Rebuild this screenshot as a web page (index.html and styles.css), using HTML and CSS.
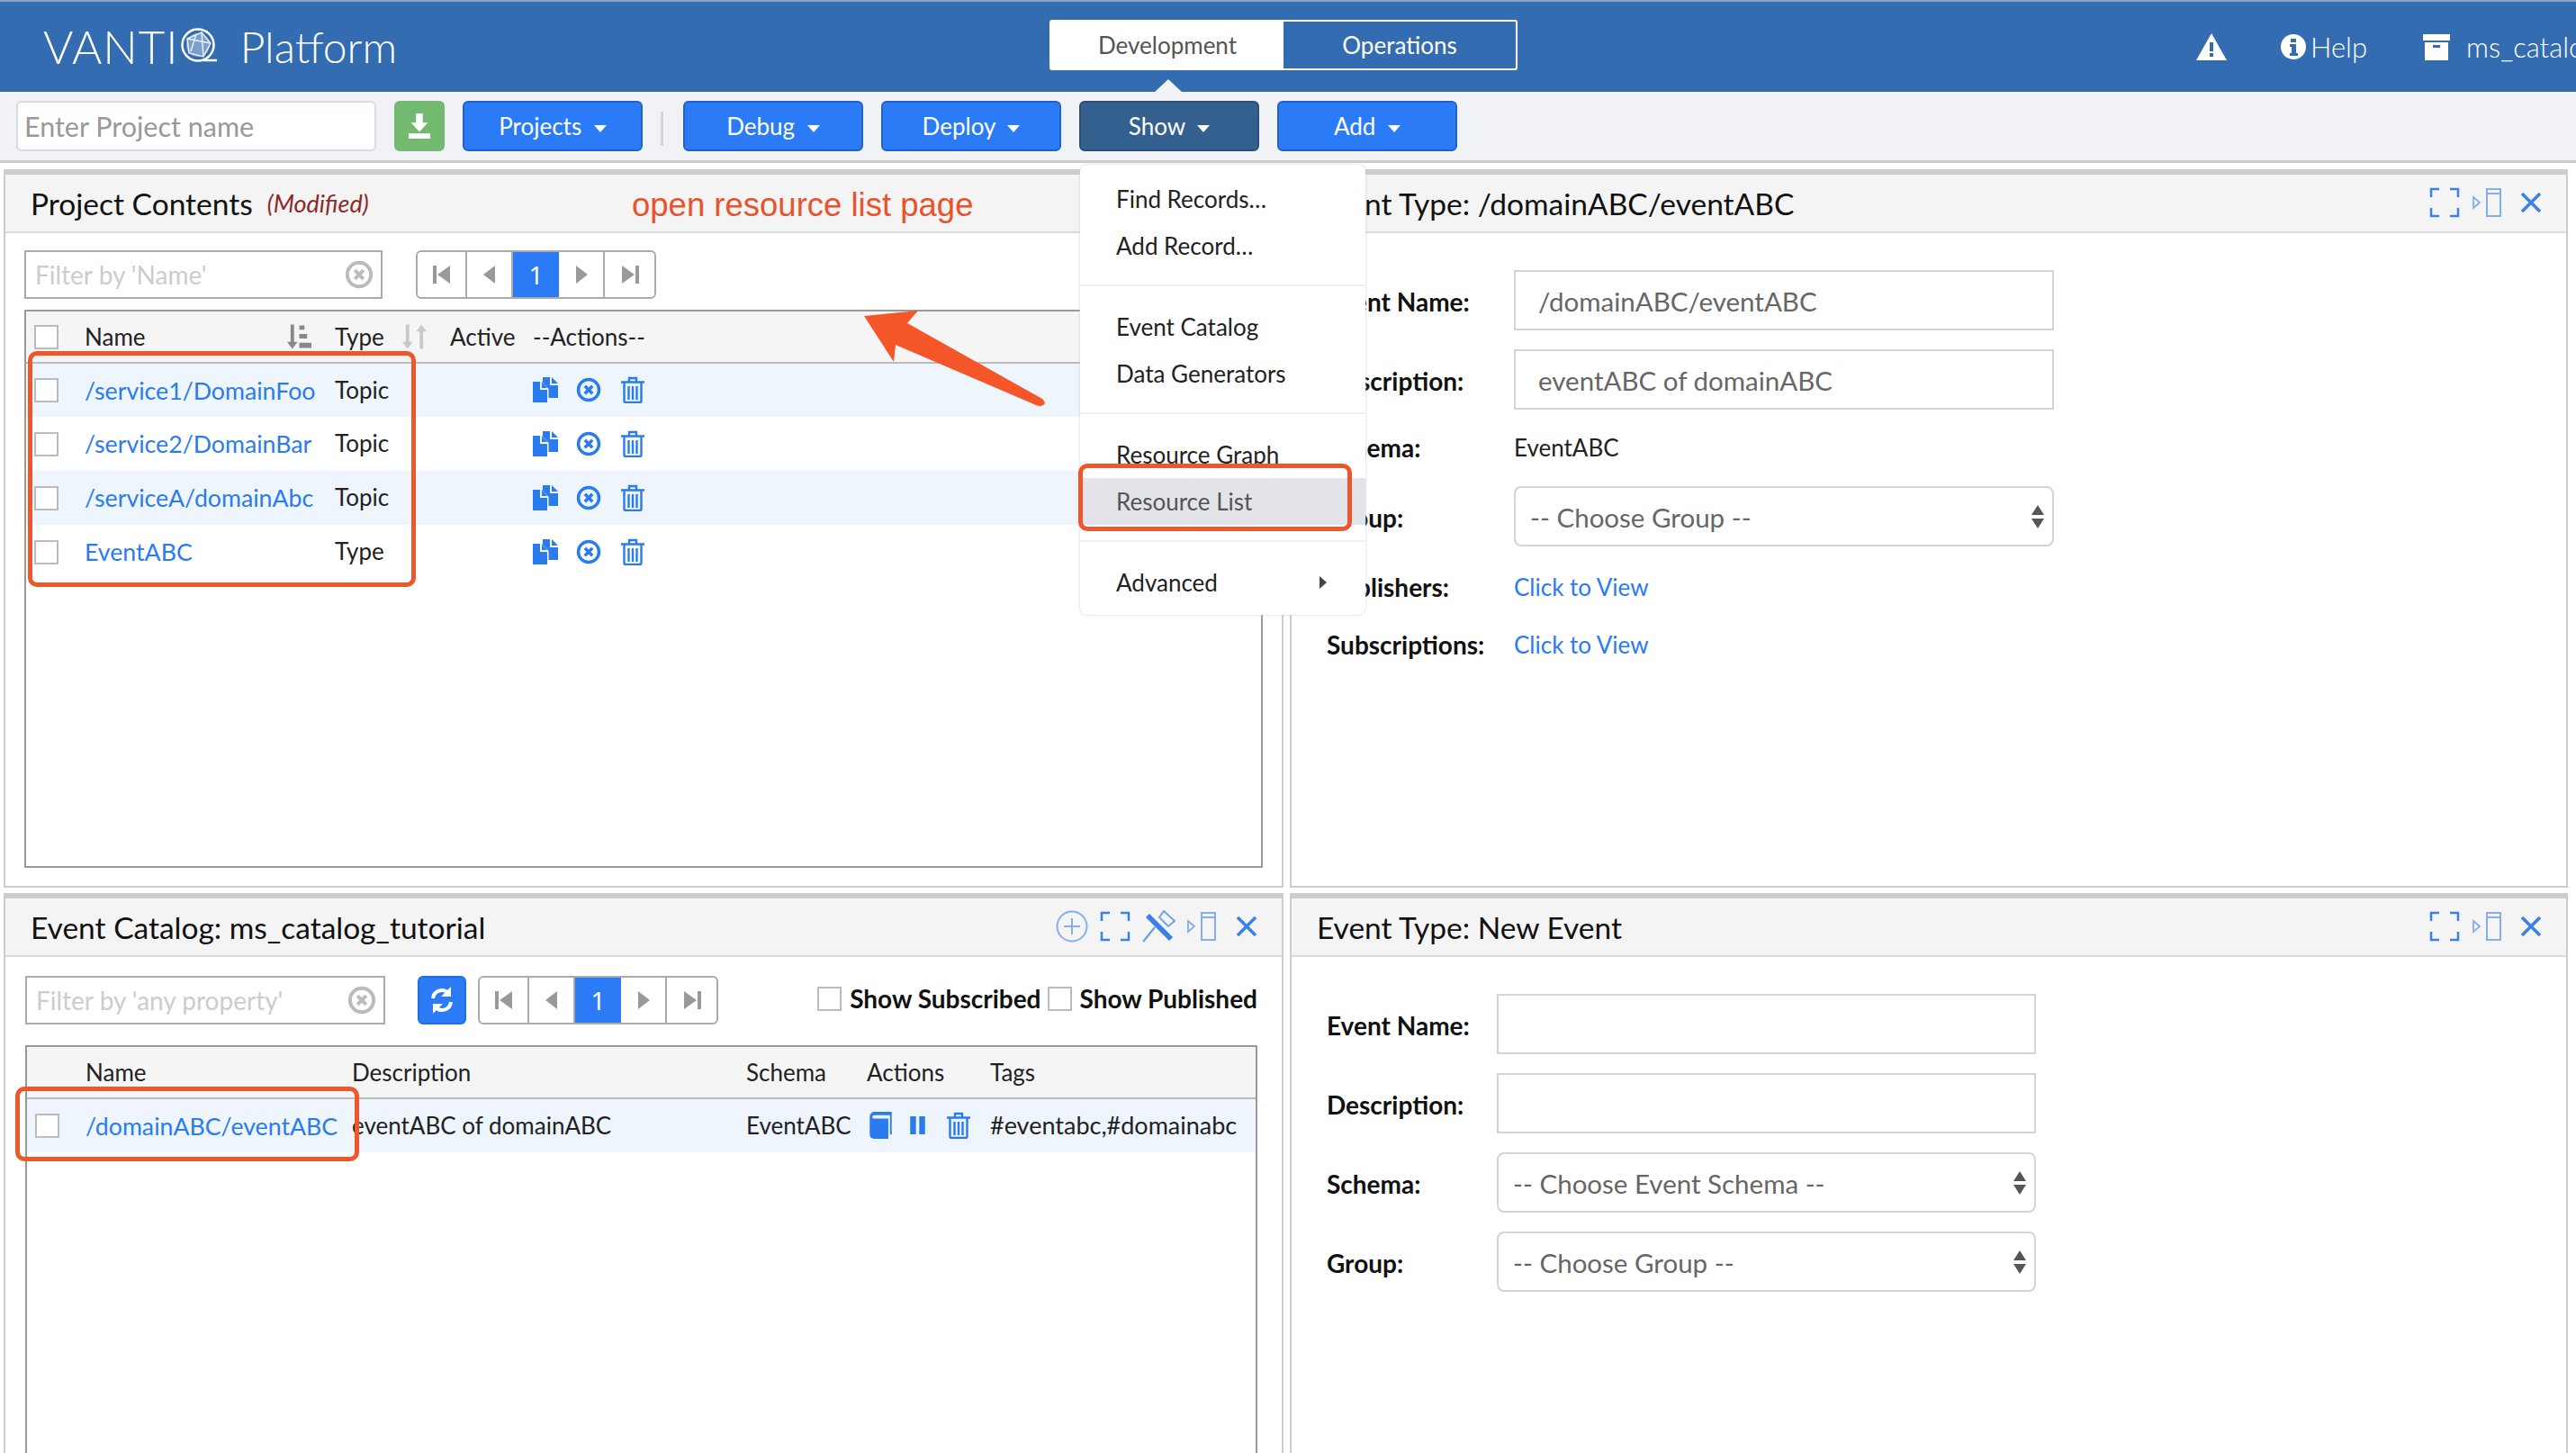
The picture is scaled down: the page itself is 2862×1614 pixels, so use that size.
FILE: index.html
```html
<!DOCTYPE html>
<html lang="en">
    <head>
        <meta charset="UTF-8" />
        <title>VANTIQ Platform</title>
        <link rel="stylesheet" href="styles.css">
    </head>

    <body>
        <!-- shared icons -->
        <svg class="sprite">
            <symbol id="i-copy" viewBox="0 0 28 28">
                <path d="M11 0h8v9h9v14H17.500V13l-6.500-7z"/>
                <path d="M21 0l7 7h-7z"/>
                <path d="M0 5h8v9h8v14H0z"/>
                <path d="M10 5l6 7h-6z"/>
            </symbol>
            <symbol id="i-cancel" viewBox="0 0 28 28">
                <circle cx="14" cy="14" r="11.500" fill="none" stroke="currentColor" stroke-width="3.500"/>
                <path d="M9.800 9.800l8.400 8.400M18.200 9.800l-8.400 8.400" fill="none" stroke="currentColor" stroke-width="3.500"/>
            </symbol>
            <symbol id="i-trash" viewBox="0 0 26 30">
                <path d="M0 6.500h26M9 6V2h8v4M3.500 7v20.500a1.500 1.500 0 0 0 1.500 1.500h16a1.500 1.500 0 0 0 1.500-1.500V7M8.500 11v15M13 11v15M17.500 11v15" fill="none" stroke="currentColor" stroke-width="2.400"/>
            </symbol>
            <symbol id="i-first" viewBox="0 0 24 24">
                <path d="M2 2h4v20H2zM21 2v20L7 12z"/>
            </symbol>
            <symbol id="i-prev" viewBox="0 0 24 24">
                <path d="M18 2v20L5 12z"/>
            </symbol>
            <symbol id="i-next" viewBox="0 0 24 24">
                <path d="M6 2v20l13-10z"/>
            </symbol>
            <symbol id="i-last" viewBox="0 0 24 24">
                <path d="M3 2v20l14-10zM18 2h4v20h-4z"/>
            </symbol>
            <symbol id="i-full" viewBox="0 0 34 34">
                <path d="M11 2H2v9M23 2h9v9M2 23v9h9M32 23v9h-9" fill="none" stroke="currentColor" stroke-width="2.500"/>
            </symbol>
            <symbol id="i-side" viewBox="0 0 34 34">
                <path d="M1 11l7 6-7 6z" fill="none" stroke="currentColor" stroke-width="1.800" opacity=".6"/>
                <path d="M16 2h15v30H16zM16 7h15" fill="none" stroke="currentColor" stroke-width="2" opacity=".6"/>
            </symbol>
            <symbol id="i-close" viewBox="0 0 24 24">
                <path d="M2 2l20 20M22 2L2 22" fill="none" stroke="currentColor" stroke-width="3.500"/>
            </symbol>
            <symbol id="i-plus" viewBox="0 0 36 36">
                <circle cx="18" cy="18" r="16.500" fill="none" stroke="currentColor" stroke-width="2" opacity=".6"/>
                <path d="M18 9v18M9 18h18" fill="none" stroke="currentColor" stroke-width="2" opacity=".6"/>
            </symbol>
            <symbol id="i-pin" viewBox="0 0 37 36">
                <path d="M1 35l13-16" fill="none" stroke="currentColor" stroke-width="2" opacity=".8"/>
                <path d="M24 1l12 11-7 6-10-10z" fill="none" stroke="currentColor" stroke-width="2" opacity=".7"/>
                <path d="M8 4l26 26-4 4L4 8z" fill="currentColor"/>
            </symbol>
        </svg>

        <header class="top-bar">
            <div class="brand">
                <span class="logo-text">VANTI</span>
                <svg class="logo-q" viewBox="0 0 42 40">
                    <circle cx="20" cy="19" r="17.500" fill="none" stroke="#fff" stroke-width="2.500"/>
                    <circle cx="20" cy="19" r="13" fill="#fff" opacity=".35"/>
                    <path d="M8 12l16-7 10 12-8 15-16-4zM12 26l6-19M8 12l26 5M24 5l2 27" fill="none" stroke="#fff" stroke-width="1.500" opacity=".85"/>
                    <path d="M26 36h15" stroke="#fff" stroke-width="2.500"/>
                </svg>
                <span class="platform">Platform</span>
            </div>
            <div class="tabs">
                <div class="tab active">Development</div>
                <div class="tab">Operations</div>
            </div>
            <svg class="top-icon warn" viewBox="0 0 34 30">
                <path d="M17 0L34 30H0z" fill="#fff"/>
                <path d="M15 10h4v10h-4zM15 22h4v4h-4z" fill="#336cb0"/>
            </svg>
            <div class="help">
                <svg class="top-icon info" viewBox="0 0 28 28">
                    <circle cx="14" cy="14" r="14" fill="#fff"/>
                    <path d="M11 5h6v4h-6zM10 11h7v10h2v3H10v-3h2v-7h-2z" fill="#336cb0"/>
                </svg>
                <span>Help</span>
            </div>
            <div class="account">
                <svg class="top-icon box" viewBox="0 0 30 30">
                    <path d="M0 1h30v7H0zM2 10h26v20H2z" fill="#fff"/>
                    <path d="M11 13h8v3h-8z" fill="#336cb0"/>
                </svg>
                <span>ms_catalog_tutorial</span>
            </div>
        </header>

        <nav class="tool-bar">
            <input class="project-name" type="text" placeholder="Enter Project name">
            <button class="btn btn-save">
                <svg viewBox="0 0 28 30"><path d="M10 0h8v11h6L14 22 4 11h6zM1 24h26v6H1z" fill="#fff"/></svg>
            </button>
            <button class="btn">Projects <i class="caret"></i></button>
            <span class="tool-sep"></span>
            <button class="btn">Debug <i class="caret"></i></button>
            <button class="btn">Deploy <i class="caret"></i></button>
            <div class="menu-wrap">
                <button class="btn btn-open">Show <i class="caret"></i></button>
                <div class="menu">
                    <div class="menu-item">Find Records…</div>
                    <div class="menu-item">Add Record…</div>
                    <div class="menu-sep"></div>
                    <div class="menu-item">Event Catalog</div>
                    <div class="menu-item">Data Generators</div>
                    <div class="menu-sep"></div>
                    <div class="menu-item">Resource Graph</div>
                    <div class="menu-item hover">Resource List</div>
                    <div class="menu-sep"></div>
                    <div class="menu-item">Advanced <i class="caret-right"></i></div>
                </div>
            </div>
            <button class="btn">Add <i class="caret"></i></button>
        </nav>

        <main class="panels">
            <!-- project contents -->
            <section class="panel">
                <div class="panel-head">
                    <h2>Project Contents</h2>
                    <em class="modified">(Modified)</em>
                </div>
                <div class="list-tools">
                    <div class="filter">
                        <input type="text" placeholder="Filter by 'Name'">
                        <svg class="filter-clear"><use href="#i-cancel"/></svg>
                    </div>
                    <div class="pager">
                        <span><svg><use href="#i-first"/></svg></span>
                        <span><svg><use href="#i-prev"/></svg></span>
                        <span class="current">1</span>
                        <span><svg><use href="#i-next"/></svg></span>
                        <span><svg><use href="#i-last"/></svg></span>
                    </div>
                </div>
                <div class="grid-wrap project-grid">
                    <table>
                        <colgroup>
                            <col class="c-check"><col class="c-name"><col class="c-type"><col class="c-active"><col>
                        </colgroup>
                        <thead>
                            <tr>
                                <th><input type="checkbox"></th>
                                <th>
                                    <div class="th-sort">Name
                                        <svg class="sort" viewBox="0 0 28 28">
                                            <path d="M4 0h4v20h4l-6 8-6-8h4zM14 1h6v5h-6zM14 11h9v5h-9zM14 21h14v6H14z" fill="#888"/>
                                        </svg>
                                    </div>
                                </th>
                                <th>
                                    <div class="th-sort">Type
                                        <svg class="sort sort-type" viewBox="0 0 28 28">
                                            <path d="M4 0h4v20h4l-6 8-6-8h4z" fill="#c9c9c9"/>
                                            <path d="M20 28h4V8h4L22 0l-6 8h4z" fill="#c9c9c9"/>
                                        </svg>
                                    </div>
                                </th>
                                <th>Active</th>
                                <th>--Actions--</th>
                            </tr>
                        </thead>
                        <tbody>
                            <tr class="odd">
                                <td class="low"><input type="checkbox"></td>
                                <td class="low"><a href="#">/service1/DomainFoo</a></td>
                                <td>Topic</td>
                                <td></td>
                                <td class="actions"><svg class="act-copy"><use href="#i-copy"/></svg><svg class="act-cancel"><use href="#i-cancel"/></svg><svg class="act-trash"><use href="#i-trash"/></svg></td>
                            </tr>
                            <tr>
                                <td class="low"><input type="checkbox"></td>
                                <td class="low"><a href="#">/service2/DomainBar</a></td>
                                <td>Topic</td>
                                <td></td>
                                <td class="actions"><svg class="act-copy"><use href="#i-copy"/></svg><svg class="act-cancel"><use href="#i-cancel"/></svg><svg class="act-trash"><use href="#i-trash"/></svg></td>
                            </tr>
                            <tr class="odd">
                                <td class="low"><input type="checkbox"></td>
                                <td class="low"><a href="#">/serviceA/domainAbc</a></td>
                                <td>Topic</td>
                                <td></td>
                                <td class="actions"><svg class="act-copy"><use href="#i-copy"/></svg><svg class="act-cancel"><use href="#i-cancel"/></svg><svg class="act-trash"><use href="#i-trash"/></svg></td>
                            </tr>
                            <tr>
                                <td class="low"><input type="checkbox"></td>
                                <td class="low"><a href="#">EventABC</a></td>
                                <td>Type</td>
                                <td></td>
                                <td class="actions"><svg class="act-copy"><use href="#i-copy"/></svg><svg class="act-cancel"><use href="#i-cancel"/></svg><svg class="act-trash"><use href="#i-trash"/></svg></td>
                            </tr>
                        </tbody>
                    </table>
                </div>
            </section>

            <!-- event type detail -->
            <section class="panel">
                <div class="panel-head">
                    <h2>Event Type: /domainABC/eventABC</h2>
                    <div class="head-icons">
                        <svg class="hi"><use href="#i-full"/></svg>
                        <svg class="hi"><use href="#i-side"/></svg>
                        <svg class="hi-close"><use href="#i-close"/></svg>
                    </div>
                </div>
                <form class="detail-form wide-labels">
                    <label>Event Name:</label>
                    <input class="field" type="text" value="/domainABC/eventABC">
                    <label>Description:</label>
                    <input class="field" type="text" value="eventABC of domainABC">
                    <label class="short">Schema:</label>
                    <div class="short plain">EventABC</div>
                    <label>Group:</label>
                    <div class="select">-- Choose Group -- <i class="updown"></i></div>
                    <label class="short first-link">Publishers:</label>
                    <a class="short first-link" href="#">Click to View</a>
                    <label class="short">Subscriptions:</label>
                    <a class="short" href="#">Click to View</a>
                </form>
            </section>

            <!-- event catalog -->
            <section class="panel">
                <div class="panel-head">
                    <h2>Event Catalog: ms_catalog_tutorial</h2>
                    <div class="head-icons catalog-icons">
                        <svg class="hi hi-plus"><use href="#i-plus"/></svg>
                        <svg class="hi"><use href="#i-full"/></svg>
                        <svg class="hi hi-pin"><use href="#i-pin"/></svg>
                        <svg class="hi"><use href="#i-side"/></svg>
                        <svg class="hi-close"><use href="#i-close"/></svg>
                    </div>
                </div>
                <div class="list-tools catalog-tools">
                    <div class="filter">
                        <input type="text" placeholder="Filter by 'any property'">
                        <svg class="filter-clear"><use href="#i-cancel"/></svg>
                    </div>
                    <button class="btn-refresh">
                        <svg viewBox="0 0 28 30">
                            <path d="M4 13a10 10 0 0 1 17-6" fill="none" stroke="#fff" stroke-width="4"/>
                            <path d="M24 0v11H13z" fill="#fff"/>
                            <path d="M24 17a10 10 0 0 1-17 6" fill="none" stroke="#fff" stroke-width="4"/>
                            <path d="M4 30V19h11z" fill="#fff"/>
                        </svg>
                    </button>
                    <div class="pager">
                        <span><svg><use href="#i-first"/></svg></span>
                        <span><svg><use href="#i-prev"/></svg></span>
                        <span class="current">1</span>
                        <span><svg><use href="#i-next"/></svg></span>
                        <span><svg><use href="#i-last"/></svg></span>
                    </div>
                    <div class="show-checks">
                        <label><input type="checkbox">Show Subscribed</label>
                        <label><input type="checkbox">Show Published</label>
                    </div>
                </div>
                <div class="grid-wrap catalog-grid">
                    <table>
                        <colgroup>
                            <col class="c-check"><col class="c-cname"><col class="c-desc"><col class="c-schema"><col class="c-actions"><col>
                        </colgroup>
                        <thead>
                            <tr>
                                <th></th>
                                <th>Name</th>
                                <th>Description</th>
                                <th>Schema</th>
                                <th>Actions</th>
                                <th>Tags</th>
                            </tr>
                        </thead>
                        <tbody>
                            <tr class="odd">
                                <td class="low"><input type="checkbox"></td>
                                <td class="low"><a href="#">/domainABC/eventABC</a></td>
                                <td>eventABC of domainABC</td>
                                <td>EventABC</td>
                                <td class="actions">
                                    <svg class="act-book" viewBox="0 0 26 32"><path d="M0 6C0 2 3 0 6 0h20v27h-2V4H6C4 4 3 5 3 6s1 2 3 2h16v24H5c-3 0-5-2-5-5z" fill="currentColor"/></svg>
                                    <svg class="act-pause" viewBox="0 0 18 24"><path d="M0 1h7v22H0zM11 1h7v22h-7z" fill="currentColor"/></svg>
                                    <svg class="act-trash"><use href="#i-trash"/></svg>
                                </td>
                                <td class="tags">#eventabc,#domainabc</td>
                            </tr>
                        </tbody>
                    </table>
                </div>
            </section>

            <!-- new event -->
            <section class="panel">
                <div class="panel-head">
                    <h2>Event Type: New Event</h2>
                    <div class="head-icons">
                        <svg class="hi"><use href="#i-full"/></svg>
                        <svg class="hi"><use href="#i-side"/></svg>
                        <svg class="hi-close"><use href="#i-close"/></svg>
                    </div>
                </div>
                <form class="detail-form new-form">
                    <label>Event Name:</label>
                    <input class="field" type="text">
                    <label>Description:</label>
                    <input class="field" type="text">
                    <label>Schema:</label>
                    <div class="select">-- Choose Event Schema -- <i class="updown"></i></div>
                    <label>Group:</label>
                    <div class="select">-- Choose Group -- <i class="updown"></i></div>
                </form>
            </section>
        </main>

        <!-- annotations drawn over the screenshot -->
        <div class="note-text">open resource list page</div>
        <svg class="note-arrow" viewBox="0 0 220 120">
            <path d="M10 16L70 10 58 24 208 108Q213 113 209 115 206 117 201 115L45 48 43 67z" fill="#f4562a"/>
        </svg>
        <div class="note-box box-rows"></div>
        <div class="note-box box-menu"></div>
        <div class="note-box box-event"></div>
    </body>
</html>
```

FILE: styles.css
```css
* {
    margin: 0;
    padding: 0;
    box-sizing: border-box;
}

html,
body {
    height: 100%;
}

body {
    position: relative;
    width: 2862px;
    height: 1614px;
    overflow: hidden;
    background: #fff;
    font-family: Lato, "Noto Sans", sans-serif;
    font-size: 26px;
    color: #222;
}

input,
button {
    font-family: inherit;
}

.sprite {
    display: none;
}

a {
    color: #2b7bf0;
    text-decoration: none;
}

/* top bar */

.top-bar {
    display: flex;
    align-items: center;
    height: 102px;
    padding-left: 48px;
    background: #336cb0;
    border-top: 2px solid #8ba3c4;
    color: #fff;
    white-space: nowrap;
    overflow: hidden;
}

.top-bar > * {
    flex: none;
}

.brand {
    display: flex;
    align-items: center;
    width: 1118px;
    padding-bottom: 2px;
}

.logo-text {
    font-size: 51px;
    font-weight: 300;
    letter-spacing: 1px;
}

.logo-q {
    width: 42px;
    height: 40px;
    margin-left: 1px;
}

.platform {
    margin-left: 25px;
    font-size: 48px;
    font-weight: 300;
}

.tabs {
    position: relative;
    display: flex;
    width: 520px;
    height: 56px;
    margin-bottom: 4px;
    border: 2px solid #fff;
    border-radius: 3px;
}

.tabs::after {
    content: "";
    position: absolute;
    left: 114px;
    top: 64px;
    border-left: 16px solid transparent;
    border-right: 16px solid transparent;
    border-bottom: 15px solid #f0f2f6;
}

.tab {
    width: 50%;
    line-height: 52px;
    text-align: center;
    font-size: 26px;
}

.tab.active {
    width: 258px;
    background: #fff;
    color: #555;
}

.top-icon {
    flex: none;
}

.warn {
    width: 34px;
    height: 30px;
    margin-left: 754px;
}

.help {
    display: flex;
    align-items: center;
    margin-left: 60px;
    font-size: 31px;
    font-weight: 300;
}

.info {
    width: 28px;
    height: 28px;
    margin-right: 5px;
}

.account {
    display: flex;
    align-items: center;
    margin-left: 62px;
    font-size: 31px;
    font-weight: 300;
}

.box {
    width: 30px;
    height: 30px;
    margin-right: 18px;
}

/* tool bar */

.tool-bar {
    display: flex;
    align-items: center;
    gap: 20px;
    height: 79px;
    padding-left: 18px;
    background: #f0f2f6;
    border-bottom: 3px solid #ccc;
}

.project-name {
    width: 400px;
    height: 56px;
    padding: 0 7px;
    border: 2px solid #d8dbe0;
    border-radius: 6px;
    font-size: 30.500px;
    outline: none;
}

.project-name::placeholder {
    color: #999;
}

.btn {
    width: 200px;
    height: 56px;
    background: #2b7bf6;
    border: 2px solid #1f63c8;
    border-radius: 6px;
    color: #fff;
    font-size: 26px;
}

.btn-save {
    width: 56px;
    background: #73b970;
    border-color: #73b970;
}

.btn-save svg {
    display: block;
    width: 26px;
    height: 28px;
    margin: auto;
}

.btn-open {
    background: #34608f;
    border-color: #2b507a;
}

.caret {
    display: inline-block;
    margin-left: 7px;
    vertical-align: middle;
    border-left: 7px solid transparent;
    border-right: 7px solid transparent;
    border-top: 8px solid #fff;
}

.tool-sep {
    width: 3px;
    height: 38px;
    margin: 6px 2px 0 0;
    background: #d4d6da;
}

.menu-wrap {
    position: relative;
}

.menu {
    position: absolute;
    z-index: 5;
    top: 71px;
    left: 1px;
    width: 317px;
    padding: 12px 0 10px;
    background: #fff;
    border-radius: 8px;
    box-shadow: 0 0 3px #ccc;
}

.menu-item {
    position: relative;
    height: 52px;
    padding-left: 40px;
    line-height: 52px;
    font-size: 26px;
    color: #222;
}

.menu-item.hover {
    background: #e2e4ea;
    color: #555;
}

.menu-sep {
    height: 2px;
    margin: 17px 0 19px;
    background: #eeeff1;
}

.caret-right {
    position: absolute;
    right: 43px;
    top: 19px;
    border-top: 7px solid transparent;
    border-bottom: 7px solid transparent;
    border-left: 8px solid #444;
}

/* panels */

.panels {
    display: grid;
    grid-template-columns: 1422px 1420px;
    grid-template-rows: 798px 640px;
    column-gap: 7px;
    row-gap: 6px;
    margin-top: 7px;
    padding-left: 4px;
}

.panel {
    border: 2px solid #ccc;
    border-top-width: 6px;
    overflow: hidden;
}

.panel-head {
    display: flex;
    align-items: center;
    height: 65px;
    padding: 0 27px 2px 28px;
    background: #f4f4f5;
    border-bottom: 2px solid #d5dadb;
}

.panel-head h2 {
    margin-top: 2px;
    font-size: 33.500px;
    font-weight: 400;
    color: #111;
    white-space: nowrap;
}

.modified {
    margin: 2px 0 0 16px;
    font-size: 27px;
    color: #8c2a2a;
}

.head-icons {
    display: flex;
    align-items: center;
    gap: 14px;
    margin-left: auto;
    color: #3a80e6;
}

.hi {
    width: 34px;
    height: 34px;
}

.hi-plus {
    width: 36px;
    height: 36px;
}

.hi-pin {
    width: 37px;
    height: 36px;
}

.hi-close {
    width: 24px;
    height: 24px;
    margin-left: 5px;
}

.catalog-icons {
    gap: 13px;
}

.catalog-icons .hi-close {
    margin-left: 7px;
}

/* filter + pager row */

.list-tools {
    display: flex;
    align-items: center;
    margin: 19px 0 12px 21px;
}

.catalog-tools {
    margin: 21px 27px 23px 22px;
}

.filter {
    position: relative;
    width: 398px;
    height: 54px;
    border: 2px solid #aaa;
}

.catalog-tools .filter {
    width: 400px;
}

.filter input {
    width: 340px;
    height: 50px;
    padding-left: 10px;
    border: 0;
    outline: none;
    font-size: 28px;
}

.filter input::placeholder {
    color: #ccc;
}

.filter-clear {
    position: absolute;
    right: 8px;
    top: 9px;
    width: 32px;
    height: 32px;
    color: #bbb;
}

.pager {
    display: flex;
    height: 54px;
    margin-left: 37px;
    border: 2px solid #aaa;
    border-radius: 6px;
    overflow: hidden;
}

.pager span {
    display: flex;
    align-items: center;
    justify-content: center;
    width: 51px;
    border-right: 2px solid #aaa;
}

.pager span:first-child,
.pager span:last-child {
    width: 55px;
}

.pager span:last-child {
    border-right: 0;
}

.pager svg {
    width: 24px;
    height: 24px;
    fill: #999;
}

.pager .current {
    background: #2b7bf6;
    border-right: 0;
    color: #fff;
    font-size: 28px;
    font-family: "Noto Sans", sans-serif;
}

.catalog-tools .pager {
    margin-left: 13px;
}

.btn-refresh {
    width: 54px;
    height: 54px;
    margin-left: 36px;
    background: #2b7bf6;
    border: 2px solid #1f6fdc;
    border-radius: 6px;
}

.btn-refresh svg {
    display: block;
    width: 28px;
    height: 30px;
    margin: auto;
}

.show-checks {
    display: flex;
    gap: 7px;
    margin: 0 0 4px auto;
}

.show-checks label {
    display: flex;
    align-items: center;
    gap: 9px;
    font-weight: 700;
    font-size: 28px;
    color: #111;
}

input[type="checkbox"] {
    display: block;
    appearance: none;
    width: 27px;
    height: 27px;
    background: #fff;
    border: 2px solid #bbb;
}

/* tables */

.grid-wrap {
    border: 2px solid #999;
}

.project-grid {
    width: 1376px;
    height: 620px;
    margin-left: 21px;
}

.catalog-grid {
    width: 1369px;
    height: 520px;
    margin-left: 22px;
}

table {
    width: 100%;
    border-collapse: collapse;
    table-layout: fixed;
}

.c-check { width: 65px; }
.c-name { width: 278px; }
.c-type { width: 128px; }
.c-active { width: 92px; }
.c-cname { width: 296px; }
.c-desc { width: 438px; }
.c-schema { width: 134px; }
.c-actions { width: 137px; }

thead tr {
    height: 57px;
    background: #f5f5f5;
    border-bottom: 2px solid #bbb;
}

tbody tr {
    height: 60px;
}

.odd {
    background: #eef5fd;
}

th {
    font-weight: 400;
    text-align: left;
    font-size: 26px;
    color: #222;
    white-space: nowrap;
}

td {
    padding-bottom: 2px;
    font-size: 26px;
    color: #222;
    white-space: nowrap;
    overflow: visible;
}

td.low {
    padding-bottom: 0;
}

th:first-child input,
td:first-child input {
    margin-left: 9px;
}

td a {
    font-size: 26.700px;
}

.tags {
    font-size: 27px;
}

.th-sort {
    display: flex;
    align-items: center;
    justify-content: space-between;
    padding-right: 26px;
}

.th-sort .sort {
    width: 27px;
    height: 28px;
}

.th-sort .sort-type {
    margin-right: -4px;
}

th:nth-child(3) .th-sort {
    padding-right: 30px;
}

td.actions {
    padding-bottom: 5px;
    color: #2b7bf0;
}

.actions svg {
    vertical-align: middle;
}

.act-copy {
    width: 28px;
    height: 28px;
    fill: currentColor;
}

.act-cancel {
    width: 28px;
    height: 28px;
    margin-left: 20px;
}

.act-trash {
    width: 26px;
    height: 30px;
    margin-left: 22px;
}

.act-book {
    width: 25px;
    height: 30px;
    margin-left: 3px;
}

.act-pause {
    width: 17px;
    height: 22px;
    margin-left: 13px;
}

.catalog-grid .act-trash {
    margin-left: 18px;
}

/* detail forms */

.detail-form {
    display: grid;
    grid-template-columns: 208px 600px;
    row-gap: 21px;
    align-items: center;
    padding: 41px 0 0 39px;
    font-size: 26px;
}

.new-form {
    grid-template-columns: 189px 599px;
}

.detail-form label {
    padding-top: 2px;
    font-size: 28px;
    font-weight: 700;
    color: #111;
}

.detail-form label.short {
    padding-top: 0;
}

.field {
    height: 67px;
    padding: 2px 0 0 25px;
    border: 2px solid #d4d4d4;
    outline: none;
    font-size: 29.500px;
    color: #666;
}

.select {
    position: relative;
    height: 67px;
    padding-left: 16px;
    line-height: 65px;
    border: 2px solid #d4d4d4;
    border-radius: 8px;
    font-size: 29.500px;
    color: #666;
}

.updown {
    position: absolute;
    right: 9px;
    top: 19px;
    border-left: 7px solid transparent;
    border-right: 7px solid transparent;
    border-bottom: 11px solid #555;
}

.updown::after {
    content: "";
    position: absolute;
    left: -7px;
    top: 15px;
    border-left: 7px solid transparent;
    border-right: 7px solid transparent;
    border-top: 11px solid #555;
}

.short {
    height: 43px;
    line-height: 43px;
}

.first-link {
    margin-top: 3px;
}

.plain {
    color: #222;
}

/* annotations */

.note-text {
    position: absolute;
    z-index: 4;
    left: 702px;
    top: 207px;
    font-family: "Liberation Sans", sans-serif;
    font-size: 36.500px;
    color: #e8532b;
}

.note-arrow {
    position: absolute;
    z-index: 4;
    left: 950px;
    top: 335px;
    width: 220px;
    height: 120px;
}

.note-box {
    position: absolute;
    z-index: 6;
    border: 5px solid #f0562b;
    border-radius: 10px;
}

.box-rows {
    left: 31px;
    top: 390px;
    width: 431px;
    height: 262px;
}

.box-menu {
    left: 1198px;
    top: 515px;
    width: 304px;
    height: 75px;
}

.box-event {
    left: 17px;
    top: 1207px;
    width: 382px;
    height: 83px;
}
```
